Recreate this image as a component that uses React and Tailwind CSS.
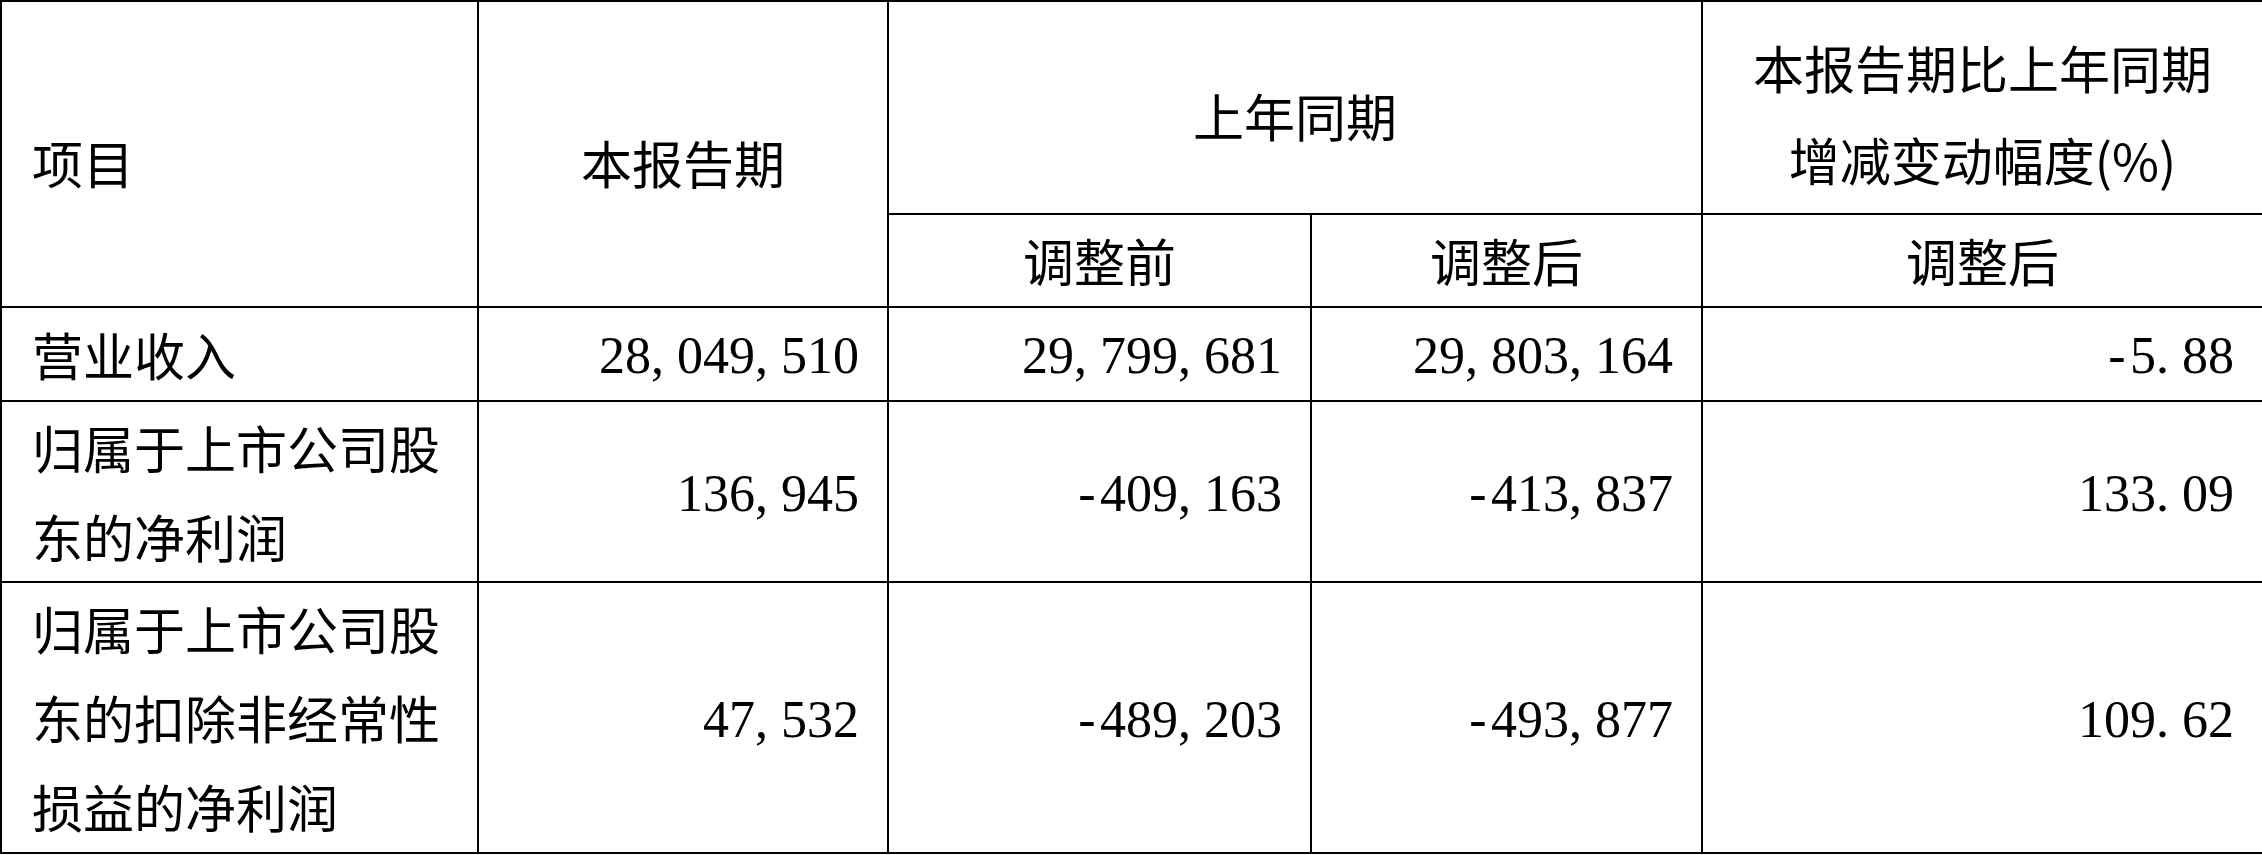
import React from 'react'

const cjk = "font-['Noto_Sans_CJK_SC','Noto_Sans',sans-serif]"

const rows = [
  { label: ['营业收入'], h: 'h-[94px]', values: ['28,049,510', '29,799,681', '29,803,164', '-5.88'] },
  { label: ['归属于上市公司股', '东的净利润'], h: 'h-[181px]', values: ['136,945', '-409,163', '-413,837', '133.09'] },
  { label: ['归属于上市公司股', '东的扣除非经常性', '损益的净利润'], h: 'h-[271px]', values: ['47,532', '-489,203', '-493,877', '109.62'] }
]

// digits in a serif face, punctuation padded to half an em like the original song-style font
const Num = ({ v }) => (
  <>
    {v.split('').map((c, i) =>
      /\d/.test(c) ? (
        <span key={i}>{c}</span>
      ) : (
        <span key={i} className={`inline-block w-[0.5em] ${c === '-' ? 'text-center' : 'text-left'}`}>
          {c}
        </span>
      )
    )}
  </>
)

const App = () => {
  return (
    <div className={`w-[2262px] h-[855px] bg-white text-black ${cjk}`}>
      <table className="table-fixed border-collapse w-[2262px] text-[51px] leading-[89px]">
        <colgroup>
          <col className="w-[477px]" />
          <col className="w-[410px]" />
          <col className="w-[423px]" />
          <col className="w-[391px]" />
          <col className="w-[561px]" />
        </colgroup>
        <thead>
          <tr className="h-[213px]">
            <th rowSpan={2} className="border-2 border-black font-normal text-left align-middle pl-[30px] pt-[16px]">
              项目
            </th>
            <th rowSpan={2} className="border-2 border-black font-normal text-center align-middle pt-[16px]">
              本报告期
            </th>
            <th colSpan={2} className="border-2 border-black font-normal text-center align-middle pt-[16px]">
              上年同期
            </th>
            <th className="border-2 border-black font-normal text-center align-middle leading-[92px] pt-[10px]">
              本报告期比上年同期
              <br />
              增减变动幅度(%)
            </th>
          </tr>
          <tr className="h-[93px]">
            <th className="border-2 border-black font-normal text-center align-middle">调整前</th>
            <th className="border-2 border-black font-normal text-center align-middle">调整后</th>
            <th className="border-2 border-black font-normal text-center align-middle">调整后</th>
          </tr>
        </thead>
        <tbody>
          {rows.map((row, index) => (
            <tr key={index} className={row.h}>
              <td className="border-2 border-black text-left align-middle pl-[30px]">
                {row.label.map((line, idx) => (
                  <div key={idx}>{line}</div>
                ))}
              </td>
              {row.values.map((v, idx) => (
                <td
                  key={idx}
                  className="border-2 border-black text-right align-middle pr-[28px] pt-[4px] font-['Liberation_Serif',serif] text-[52px] leading-[80px]"
                >
                  <Num v={v} />
                </td>
              ))}
            </tr>
          ))}
        </tbody>
      </table>
    </div>
  )
}

export default App
